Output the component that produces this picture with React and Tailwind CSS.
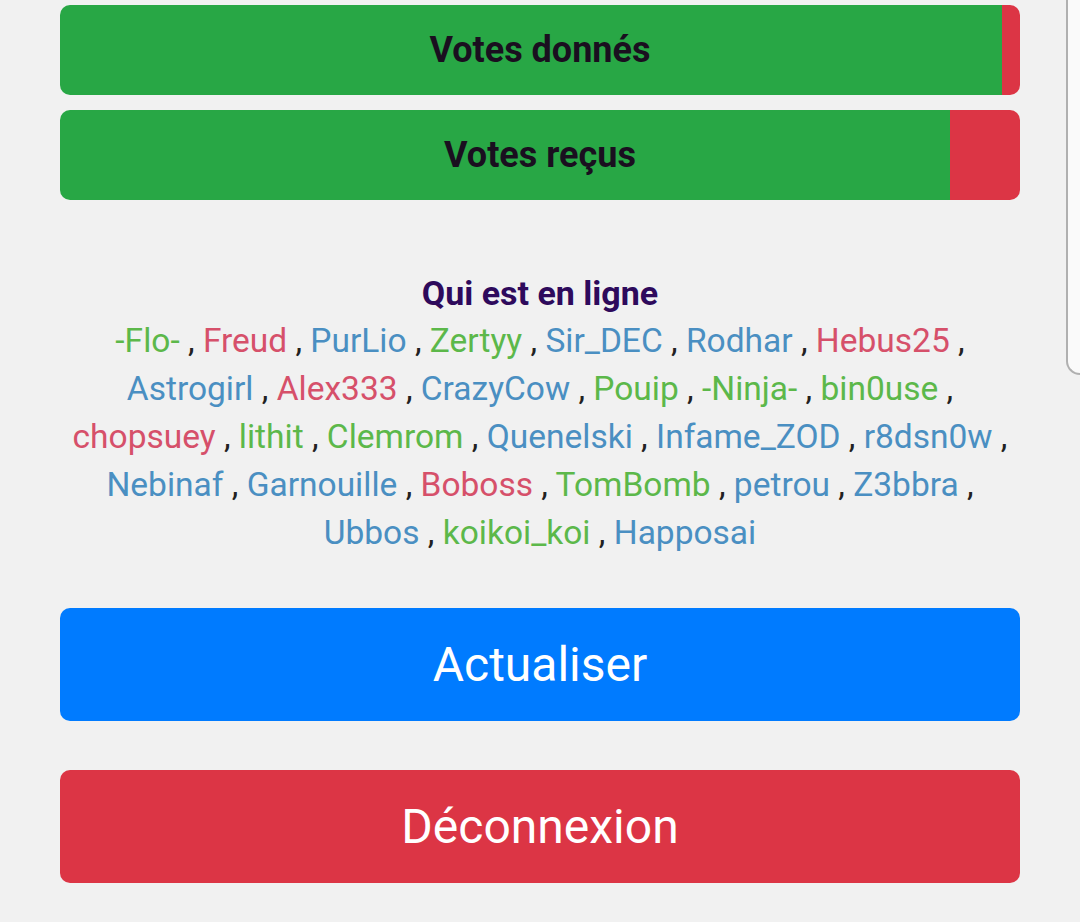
import React from 'react';

const COLORS = {
  g: 'text-[#5cb84a]',
  r: 'text-[#d6506a]',
  b: 'text-[#4a8fc2]',
};

const online = [
  ['-Flo-', 'g'], ['Freud', 'r'], ['PurLio', 'b'], ['Zertyy', 'g'], ['Sir_DEC', 'b'],
  ['Rodhar', 'b'], ['Hebus25', 'r'], ['Astrogirl', 'b'], ['Alex333', 'r'], ['CrazyCow', 'b'],
  ['Pouip', 'g'], ['-Ninja-', 'g'], ['bin0use', 'g'], ['chopsuey', 'r'], ['lithit', 'g'],
  ['Clemrom', 'g'], ['Quenelski', 'b'], ['Infame_ZOD', 'b'], ['r8dsn0w', 'b'], ['Nebinaf', 'b'],
  ['Garnouille', 'b'], ['Boboss', 'r'], ['TomBomb', 'g'], ['petrou', 'b'], ['Z3bbra', 'b'],
  ['Ubbos', 'b'], ['koikoi_koi', 'g'], ['Happosai', 'b'],
];

const VoteBar = ({ label, redClass }) => (
  <div className="grid h-[90px] rounded-[10px] overflow-hidden">
    <div className="col-start-1 row-start-1 flex">
      <div className="flex-1 bg-[#28a745]" />
      <div className={`${redClass} bg-[#dc3545]`} />
    </div>
    <div className="col-start-1 row-start-1 flex items-center justify-center text-[36px] font-bold text-[#1a0f1f]">
      {label}
    </div>
  </div>
);

export default function App() {
  return (
    <div className="relative min-h-[922px] bg-[#f1f1f1] font-['Roboto',sans-serif]">
      <div className="px-[60px] pt-[5px]">
        <div className="flex flex-col gap-[15px]">
          <VoteBar label="Votes donnés" redClass="w-[18px]" />
          <VoteBar label="Votes reçus" redClass="w-[70px]" />
        </div>

        <div className="mt-[69px] text-center leading-[48px]">
          <div className="text-[34px] font-bold text-[#2e0a5c]">Qui est en ligne</div>
          <div className="text-[33.5px] text-[#222]">
            {online.map(([name, c], i) => (
              <React.Fragment key={name}>
                <span className={COLORS[c]}>{name}</span>
                {i < online.length - 1 && ' , '}
              </React.Fragment>
            ))}
          </div>
        </div>

        <div className="mt-[51px] flex flex-col gap-[49px]">
          <button className="h-[113px] w-full rounded-[10px] bg-[#007bff] text-[48px] text-white">
            Actualiser
          </button>
          <button className="h-[113px] w-full rounded-[10px] bg-[#dc3545] text-[48px] text-white">
            Déconnexion
          </button>
        </div>
      </div>

      {/* scroll handle overlay */}
      <div className="absolute right-0 top-0 h-[375px] w-[14px] rounded-bl-[14px] border-l-2 border-b-2 border-[#b0b0b0] bg-[#fafafa]" />
    </div>
  );
}
